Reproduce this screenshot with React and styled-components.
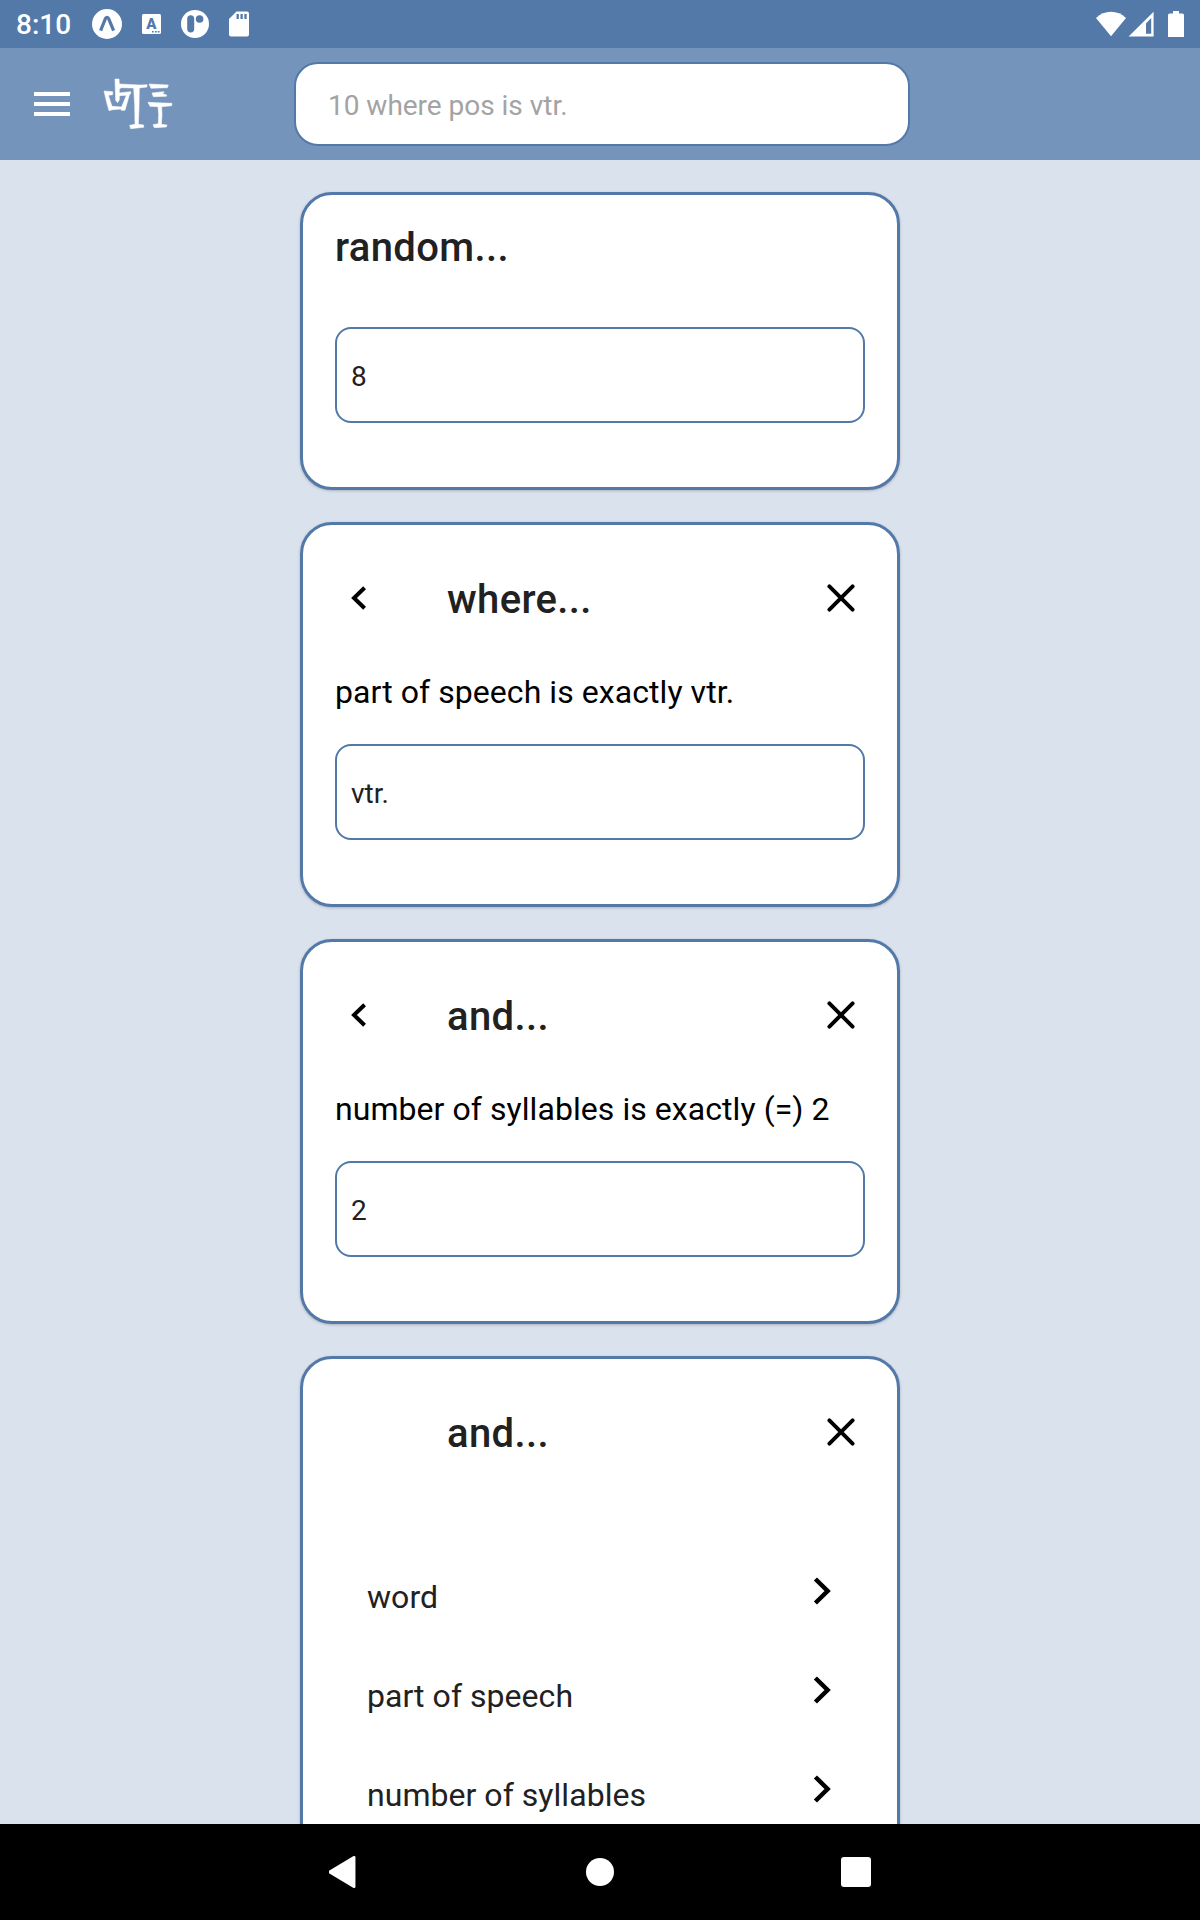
import React from "react";
import styled, { createGlobalStyle } from "styled-components";

const GlobalStyle = createGlobalStyle`
  * { box-sizing: border-box; }
  body {
    margin: 0;
    font-family: Roboto, "Liberation Sans", sans-serif;
    font-size: 28px;
    color: #212121;
  }
  svg { display: block; flex: none; }
`;

const Screen = styled.div`
  display: flex;
  flex-direction: column;
  width: 1200px;
  height: 1920px;
  overflow: hidden;
  background: #dae2ed;
`;

const StatusBar = styled.header`
  display: flex;
  align-items: center;
  justify-content: space-between;
  height: 48px;
  flex: none;
  padding: 0 16px;
  background: #5379a9;
  color: #fff;
`;

const StatusGroup = styled.div`
  display: flex;
  align-items: center;
`;

const Clock = styled.span`
  width: 76px;
  padding-top: 2px;
  font-weight: 500;
  font-size: 28px;
  line-height: 48px;
`;

const AppBar = styled.nav`
  display: flex;
  align-items: center;
  height: 112px;
  flex: none;
  padding-left: 34px;
  background: #7594bb;
`;

const MenuButton = styled.button`
  display: flex;
  flex-direction: column;
  gap: 6px;
  width: 56px;
  padding: 0;
  border: 0;
  background: none;
`;

const MenuLine = styled.span`
  width: 36px;
  height: 4px;
  background: #fff;
`;

const LogoBox = styled.div`
  padding-bottom: 3px;
`;

const SearchField = styled.div`
  width: 616px;
  height: 84px;
  margin-left: 104px;
  padding: 2px 0 0 32px;
  border: 2px solid #5379a9;
  border-radius: 24px;
  background: #fff;
  color: #a3a3a3;
  font-size: 28px;
  line-height: 80px;
  letter-spacing: -0.02px;
`;

const Content = styled.main`
  display: flex;
  flex-direction: column;
  align-items: center;
  gap: 32px;
  flex: 1;
  min-height: 0;
  padding-top: 32px;
  overflow: hidden;
`;

const Card = styled.section`
  flex: none;
  width: 600px;
  height: ${(p) => p.$height}px;
  padding: ${(p) => p.$top}px 32px 0;
  border: 3px solid #5379a9;
  border-radius: 32px;
  background: #fff;
  box-shadow: 0 1px 3px rgba(0, 0, 0, 0.22);
`;

const Title = styled.h2`
  flex: 1;
  margin: 0;
  font-size: 40px;
  font-weight: 500;
  line-height: 50px;
  letter-spacing: 0.36px;
`;

const CardHeader = styled.div`
  display: flex;
  align-items: center;
  height: 50px;

  ${Title} {
    padding-top: 4px;
  }
`;

const BackSlot = styled.div`
  width: 112px;
  padding-left: 16px;
`;

const CloseSlot = styled.div`
  width: 38px;
`;

const Description = styled.p`
  margin: 45px 0 28px;
  color: #000;
  font-size: 32px;
  line-height: 48px;
  letter-spacing: 0.06px;
  white-space: nowrap;
`;

const ValueField = styled.div`
  height: 96px;
  margin-top: ${(p) => p.$gap || 0}px;
  padding: 2px 0 0 14px;
  border: 2px solid #5379a9;
  border-radius: 16px;
  font-size: 28px;
  line-height: 92px;
`;

const OptionList = styled.ul`
  margin: 110px 0 0;
  padding: 0 32px;
  list-style: none;
`;

const Option = styled.li`
  display: flex;
  align-items: flex-start;
  justify-content: space-between;
  height: 99px;
  font-size: 32px;
`;

const OptionLabel = styled.span`
  padding-top: 6px;
  line-height: 48px;
  letter-spacing: 0.04px;
`;

const OptionIcon = styled.span`
  padding: 10px 2.5px 0 0;
`;

const NavBar = styled.footer`
  display: flex;
  align-items: center;
  justify-content: center;
  gap: 227px;
  height: 96px;
  flex: none;
  background: #000;
`;

const ExpoIcon = () => (
  <svg width="30" height="30" viewBox="0 0 30 30">
    <circle cx="15" cy="15" r="15" fill="#fff" />
    <path d="M8.6 21.7 13.4 9.6Q15 7 16.6 9.6L21.6 21.7" fill="none" stroke="#5379a9" strokeWidth="3.2" />
  </svg>
);

const KeyboardSvg = styled.svg`
  margin-left: 20px;
`;

const KeyboardIcon = () => (
  <KeyboardSvg width="19" height="20" viewBox="0 0 19 20">
    <rect width="19" height="20" rx="1.5" fill="#fff" />
    <text x="9.3" y="15" textAnchor="middle" fontSize="15" fontWeight="900" fontFamily="Roboto, sans-serif" fill="#5379a9">A</text>
    <path d="M10 17.8h1.7M13 17.8h1.7M15.8 17.8h1.7" stroke="#5379a9" strokeWidth="1.5" />
  </KeyboardSvg>
);

const PatreonSvg = styled.svg`
  margin-left: 20px;
`;

const PatreonIcon = () => (
  <PatreonSvg width="28" height="28" viewBox="0 0 28 28">
    <circle cx="14" cy="14" r="14" fill="#fff" />
    <path d="M6.2 8.8Q6.2 5.2 9.7 5.2Q13.2 5.2 13.2 8.8V18.8Q13.2 22.6 9.7 22.6Q6.2 22.6 6.2 18.8Z" fill="#5379a9" />
    <circle cx="18.6" cy="9" r="3.8" fill="#5379a9" />
  </PatreonSvg>
);

const SdSvg = styled.svg`
  margin-left: 20px;
`;

const SdCardIcon = () => (
  <SdSvg width="20" height="26" viewBox="0 0 20 26">
    <path d="M7.5 .5H18Q20 .5 20 2.5V23.5Q20 25.5 18 25.5H2Q0 25.5 0 23.5V8Z" fill="#fff" />
    <path d="M8.7 3v5M12.6 3v5M16.5 3v5" stroke="#5379a9" strokeWidth="2.3" />
  </SdSvg>
);

const WifiIcon = () => (
  <svg width="30" height="26" viewBox="0 0 30 26">
    <path d="M15 25.3 0 7Q6.5 .8 15 .8T30 7Z" fill="#fff" />
  </svg>
);

const SignalSvg = styled.svg`
  margin-left: 2px;
`;

const SignalIcon = () => (
  <SignalSvg width="26" height="26" viewBox="0 0 26 26">
    <path d="M25.6 .8V25.6H.6ZM23.2 7 18 12.5V22.8H23.2Z" fill="#fff" fillRule="evenodd" />
  </SignalSvg>
);

const BatterySvg = styled.svg`
  margin-left: 14px;
`;

const BatteryIcon = () => (
  <BatterySvg width="16" height="26" viewBox="0 0 16 26">
    <path d="M5 0h6v2.5h3.3Q16 2.5 16 4.2V26H0V4.2Q0 2.5 1.7 2.5H5Z" fill="#fff" />
  </BatterySvg>
);

const Logo = () => (
  <svg width="100" height="75" viewBox="0 0 300 225" fill="#fff" stroke="#fff" strokeWidth="1.6">
    <path d="M75 42H87L88 57 150 60 171 59V66L148 69 147 130 145 178 161 180V187L122 191 119 181 135 178 134 120 131 69 94 68 88 72V104L83 113 77 106Z" />
    <path d="M42 78 68 80 68 89 55 91 66 124 95 126 109 91 87 92V84L122 80V86L118 90 105 136 94 136 93 132 68 134 57 137 50 112Z" />
    <path d="M177 57 235 60 232 68 183 70Z" />
    <path d="M186 84 221 80 222 83 215 85 230 90 229 94 190 95Z" />
    <path d="M174 112 200 113 246 115 245 122 215 125 216 150 214 178 231 180 229 186 193 188 189 179 205 176 206 148 204 125 180 124Z" />
  </svg>
);

const BackIcon = () => (
  <svg width="16" height="24" viewBox="0 0 16 24">
    <path d="M13.6 1.8 3 12 13.6 22.2" fill="none" stroke="#000" strokeWidth="4" />
  </svg>
);

const ForwardIcon = () => (
  <svg width="18" height="28" viewBox="0 0 18 28">
    <path d="M2.4 2 14.6 14 2.4 26" fill="none" stroke="#000" strokeWidth="4.5" />
  </svg>
);

const CloseIcon = () => (
  <svg width="28" height="28" viewBox="0 0 28 28">
    <path d="M2.4 2.4 25.6 25.6M25.6 2.4 2.4 25.6" fill="none" stroke="#000" strokeWidth="3.9" strokeLinecap="round" />
  </svg>
);

const Header = ({ title, back }) => (
  <CardHeader>
    <BackSlot>{back && <BackIcon />}</BackSlot>
    <Title>{title}</Title>
    <CloseSlot><CloseIcon /></CloseSlot>
  </CardHeader>
);

const filters = [
  { title: "where...", text: "part of speech is exactly vtr.", value: "vtr." },
  { title: "and...", text: "number of syllables is exactly (=) 2", value: "2" },
];

const options = ["word", "part of speech", "number of syllables"];

export default function App() {
  return (
    <Screen>
      <GlobalStyle />
      <StatusBar>
        <StatusGroup>
          <Clock>8:10</Clock>
          <ExpoIcon />
          <KeyboardIcon />
          <PatreonIcon />
          <SdCardIcon />
        </StatusGroup>
        <StatusGroup>
          <WifiIcon />
          <SignalIcon />
          <BatteryIcon />
        </StatusGroup>
      </StatusBar>
      <AppBar>
        <MenuButton aria-label="Menu">
          <MenuLine />
          <MenuLine />
          <MenuLine />
        </MenuButton>
        <LogoBox><Logo /></LogoBox>
        <SearchField>10 where pos is vtr.</SearchField>
      </AppBar>
      <Content>
        <Card $height={298} $top={28}>
          <Title>random...</Title>
          <ValueField $gap={54}>8</ValueField>
        </Card>
        {filters.map((f) => (
          <Card key={f.title} $height={385} $top={48}>
            <Header title={f.title} back />
            <Description>{f.text}</Description>
            <ValueField>{f.value}</ValueField>
          </Card>
        ))}
        <Card $height={800} $top={48}>
          <Header title="and..." />
          <OptionList>
            {options.map((o) => (
              <Option key={o}>
                <OptionLabel>{o}</OptionLabel>
                <OptionIcon><ForwardIcon /></OptionIcon>
              </Option>
            ))}
          </OptionList>
        </Card>
      </Content>
      <NavBar>
        <svg width="30" height="34" viewBox="0 0 30 34">
          <path d="M25.2 2.2V31.8L0.2 17Z" fill="#fff" stroke="#fff" strokeWidth="2.5" strokeLinejoin="round" overflow="visible" />
        </svg>
        <svg width="28" height="28" viewBox="0 0 28 28">
          <circle cx="14" cy="14" r="14" fill="#fff" />
        </svg>
        <svg width="30" height="30" viewBox="0 0 30 30">
          <rect width="30" height="30" rx="3" fill="#fff" />
        </svg>
      </NavBar>
    </Screen>
  );
}
